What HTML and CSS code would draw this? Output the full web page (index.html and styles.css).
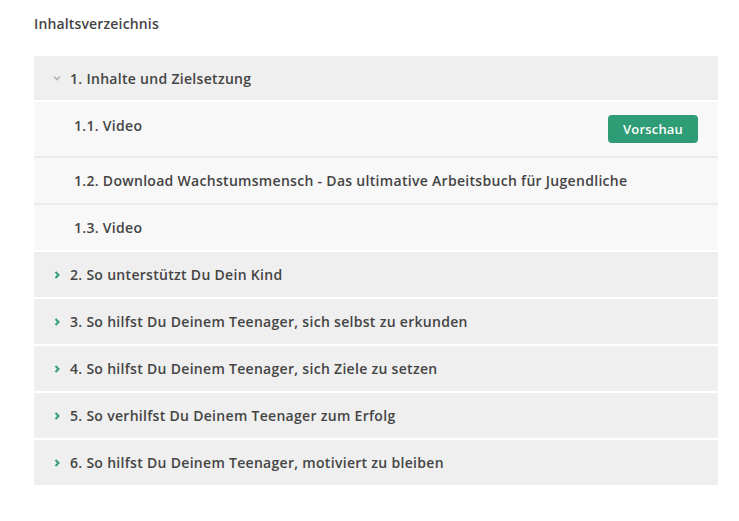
FILE: index.html
```html
<!DOCTYPE html>
<html lang="de">
<head>
<meta charset="utf-8">
<link rel="stylesheet" href="styles.css">
</head>
<body>
<div class="toc">
  <h2 class="toc-title">Inhaltsverzeichnis</h2>
  <div class="sections">
    <div class="section open">
      <div class="section-head">
        <svg class="chev down" viewBox="0 0 10 10" width="10" height="10"><path d="M2 3.5 L5 6.5 L8 3.5" fill="none" stroke="#b0b0b0" stroke-width="1.6"/></svg>
        <span>1. Inhalte und Zielsetzung</span>
      </div>
      <div class="lessons">
        <div class="lesson lesson-first">
          <span>1.1. Video</span>
          <a class="btn">Vorschau</a>
        </div>
        <div class="lesson"><span>1.2. Download Wachstumsmensch - Das ultimative Arbeitsbuch für Jugendliche</span></div>
        <div class="lesson"><span>1.3. Video</span></div>
      </div>
    </div>
    <div class="section">
      <div class="section-head">
        <svg class="chev" viewBox="0 0 10 10" width="10" height="10"><path d="M3.5 2 L6.5 5 L3.5 8" fill="none" stroke="#2e9c75" stroke-width="2"/></svg>
        <span>2. So unterstützt Du Dein Kind</span>
      </div>
    </div>
    <div class="section">
      <div class="section-head">
        <svg class="chev" viewBox="0 0 10 10" width="10" height="10"><path d="M3.5 2 L6.5 5 L3.5 8" fill="none" stroke="#2e9c75" stroke-width="2"/></svg>
        <span>3. So hilfst Du Deinem Teenager, sich selbst zu erkunden</span>
      </div>
    </div>
    <div class="section">
      <div class="section-head">
        <svg class="chev" viewBox="0 0 10 10" width="10" height="10"><path d="M3.5 2 L6.5 5 L3.5 8" fill="none" stroke="#2e9c75" stroke-width="2"/></svg>
        <span>4. So hilfst Du Deinem Teenager, sich Ziele zu setzen</span>
      </div>
    </div>
    <div class="section">
      <div class="section-head">
        <svg class="chev" viewBox="0 0 10 10" width="10" height="10"><path d="M3.5 2 L6.5 5 L3.5 8" fill="none" stroke="#2e9c75" stroke-width="2"/></svg>
        <span>5. So verhilfst Du Deinem Teenager zum Erfolg</span>
      </div>
    </div>
    <div class="section">
      <div class="section-head">
        <svg class="chev" viewBox="0 0 10 10" width="10" height="10"><path d="M3.5 2 L6.5 5 L3.5 8" fill="none" stroke="#2e9c75" stroke-width="2"/></svg>
        <span>6. So hilfst Du Deinem Teenager, motiviert zu bleiben</span>
      </div>
    </div>
  </div>
</div>
</body>
</html>
```
FILE: styles.css
```css
html, body {
  margin: 0;
  padding: 0;
  background: #ffffff;
}
body {
  font-family: "Open Sans", "Liberation Sans", sans-serif;
  color: #444444;
}
.toc {
  width: 684px;
  padding: 14px 0 0 34px;
}
.toc-title {
  margin: 0 0 23px 0;
  font-size: 14px;
  font-weight: 600;
  line-height: 19px;
  letter-spacing: 0.15px;
  color: #444444;
}
.sections {
  display: flex;
  flex-direction: column;
  gap: 2px;
}
.section {
  display: flex;
  flex-direction: column;
  gap: 2px;
}
.section-head {
  height: 45px;
  background: #efefef;
  display: flex;
  align-items: center;
  padding-left: 18px;
  font-size: 14px;
  font-weight: 600;
  letter-spacing: 0.3px;
  box-sizing: border-box;
}
.section.open .section-head {
  height: 44px;
}
.chev {
  margin-right: 8px;
  flex: none;
}
.lessons {
  display: flex;
  flex-direction: column;
}
.lesson {
  background: #f8f8f8;
  height: 47px;
  display: flex;
  align-items: center;
  justify-content: space-between;
  padding: 0 20px 0 40px;
  font-size: 14px;
  font-weight: 600;
  letter-spacing: 0.3px;
  box-sizing: border-box;
  border-bottom: 2px solid #ececec;
}
.lesson:last-child {
  border-bottom: none;
  height: 45px;
}
.lesson-first {
  height: 56px;
  align-items: flex-start;
  padding-top: 14px;
}
.lesson-first .btn {
  margin-top: -1px;
}
.btn {
  display: inline-block;
  background: #2e9c75;
  color: #ffffff;
  border-radius: 4px;
  width: 90px;
  height: 28px;
  line-height: 28px;
  text-align: center;
  font-size: 13px;
  font-weight: 600;
  letter-spacing: 0.2px;
}
```
